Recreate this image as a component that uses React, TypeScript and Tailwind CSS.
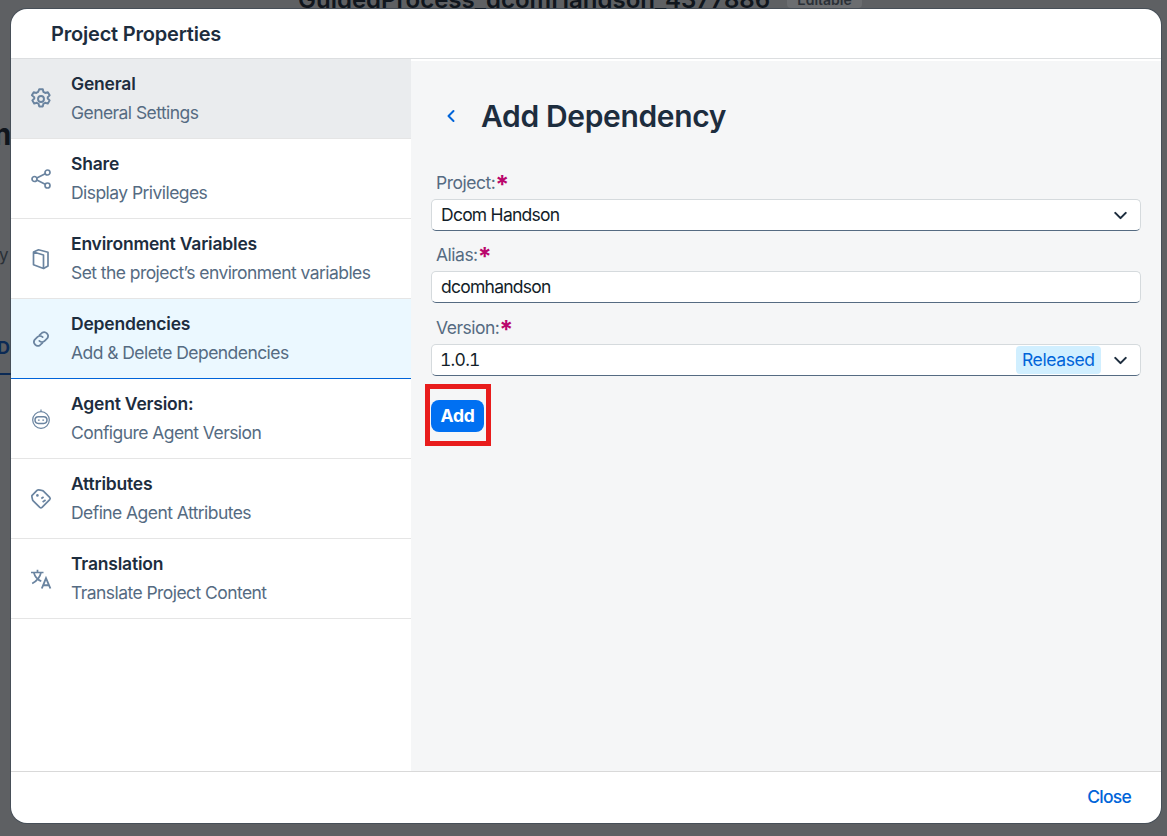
import React from 'react';
import { ChevronDown, ChevronLeft } from 'lucide-react';

const font = { fontFamily: 'Inter' };

const icons: Record<string, React.ReactNode> = {
    gear: (
        <g transform="translate(10 10) scale(1.14) translate(-10 -10)">
            <circle cx="10" cy="10" r="2.6" />
            <path d="M8.4 1.500h3.200l.5 2.300 1.600.9 2.300-.7 1.600 2.800-1.700 1.600v1.200l1.700 1.600-1.600 2.800-2.300-.7-1.600.9-.5 2.300H8.400l-.5-2.300-1.600-.9-2.300.7-1.600-2.800 1.700-1.600V8.400L2 6.800l1.600-2.800 2.300.7 1.600-.9z" strokeLinejoin="round" />
        </g>
    ),
    share: (
        <>
            <circle cx="3.500" cy="10" r="2.500" />
            <circle cx="16.500" cy="3.500" r="2.500" />
            <circle cx="16.500" cy="16.500" r="2.500" />
            <path d="M5.800 8.900 14.200 4.700M5.800 11.100l8.400 4.200" />
        </>
    ),
    book: (
        <>
            <path d="M2.500 3 12.500 6V19.500L2.500 15.800z" strokeLinejoin="round" />
            <path d="M2.500 3 7.500.8 17 3.200V17l-4.500 2.500" strokeLinejoin="round" />
        </>
    ),
    link: (
        <>
            <path d="M8.500 6.200 11 3.800a3.900 3.900 0 0 1 5.400 5.400l-2.700 2.700a3.900 3.900 0 0 1-5.400 0" strokeLinecap="round" />
            <path d="M11.500 13.800 9 16.200a3.900 3.900 0 0 1-5.400-5.400l2.700-2.700a3.900 3.900 0 0 1 5.400 0" strokeLinecap="round" />
        </>
    ),
    bot: (
        <>
            <circle cx="10" cy="11" r="8.300" strokeWidth="1.200" />
            <rect x="4" y="7.800" width="12" height="6.600" rx="3.300" strokeWidth="1.500" />
            <path d="M10 .4v2.200" strokeWidth="1.200" />
            <path d="M7.800 10.400v1.400M12.200 10.400v1.400" strokeWidth="1.700" />
        </>
    ),
    tag: (
        <>
            <path d="M.9 6.600 6 1.400q.7-.6 1.700-.5l3 .4q1 .1 1.700.8l6.300 6.300q1 1.100 0 2.200l-7.700 7.800q-1.100 1-2.200 0L2.200 11.900q-.7-.7-.8-1.700L.9 7.800q0-.6 0-1.200z" strokeLinejoin="round" />
            <circle cx="6.400" cy="6.400" r="1.300" fill="currentColor" stroke="none" />
            <path d="M10.300 9.500 12.600 8M11.600 13 14.600 11" />
        </>
    ),
    lang: (
        <>
            <path d="M0 3.500h12.500M6.500.8v2.700M10 3.500C9 8.500 5.800 12 1.200 14.400M2.800 3.500c1 4 3.700 7.200 7.500 8.800" strokeWidth="1.700" />
            <path d="M10.800 19.500 15 9.200 19.400 19.500M12.200 16.200h5.800" strokeWidth="1.900" />
        </>
    ),
};

const NavIcon = ({ name }: { name: string }) => (
    <svg viewBox="0 0 20 20" className="w-5 h-5 text-[#6a84a0] overflow-visible" fill="none" stroke="currentColor" strokeWidth="1.700">
        {icons[name]}
    </svg>
);

const navItems = [
    { icon: 'gear', title: 'General', sub: 'General Settings', rowClass: 'bg-[#eaecee] border-[#e5e5e5]' },
    { icon: 'share', title: 'Share', sub: 'Display Privileges', rowClass: 'border-[#e5e5e5]' },
    { icon: 'book', title: 'Environment Variables', sub: 'Set the project’s environment variables', rowClass: 'border-[#e5e5e5]' },
    { icon: 'link', title: 'Dependencies', sub: 'Add & Delete Dependencies', rowClass: 'bg-[#ebf8ff] border-[#0064d9]' },
    { icon: 'bot', title: 'Agent Version:', sub: 'Configure Agent Version', rowClass: 'border-[#e5e5e5]' },
    { icon: 'tag', title: 'Attributes', sub: 'Define Agent Attributes', rowClass: 'border-[#e5e5e5]' },
    { icon: 'lang', title: 'Translation', sub: 'Translate Project Content', rowClass: 'border-[#e5e5e5]' },
];

const Label = ({ text }: { text: string }) => (
    <div className="h-[32px] pl-[5px] pt-[1px] flex items-center text-[17.5px] text-[#556b82] tracking-[-0.5px]">
        {text}
        <span className="text-[#ba066c] font-bold text-[25px] leading-none mt-[3px]">*</span>
    </div>
);

const Field = ({ children }: { children: React.ReactNode }) => (
    <div className="h-[32px] bg-white rounded-[5px] border border-[#d5dadd] border-b-[#556b82] pl-[9px] pr-[9px] flex items-center text-[17.5px] text-[#131e29] tracking-[-0.75px]">
        {children}
    </div>
);

export default function App() {
    return (
        <div className="relative h-[836px] w-[1167px] overflow-hidden bg-[#5e6063]" style={font}>
            {/* dimmed page behind the dialog */}
            <div className="absolute left-[298px] top-[-18px] text-[24px] font-semibold text-[#10161d] whitespace-nowrap">
                GuidedProcess_dcomHandson_4377886
            </div>
            <div className="absolute left-[787px] top-[-11px] h-[19px] w-[75px] text-center bg-[#6b6d70] rounded text-[14px] font-semibold text-[#2a3037]">
                Editable
            </div>
            <div className="absolute left-[-16px] top-[112px] text-[30px] font-bold text-[#10161d]">m</div>
            <div className="absolute left-[-1px] top-[243px] text-[17px] text-[#2a3037]">y 2</div>
            <div className="absolute left-[-3px] top-[334px] text-[18px] font-bold text-[#0b2a55]">D</div>
            <div className="absolute left-0 top-[373px] h-[2px] w-[11px] bg-[#0b2a55]" />

            <div className="relative ml-[11px] mt-[9px] w-[1150px] h-[814px] bg-white rounded-[16px] overflow-hidden flex flex-col shadow-[0_0_0_1px_rgba(30,50,70,0.35)]">
                <div className="h-[50px] shrink-0 pl-[40px] flex items-center text-[20px] font-semibold text-[#1d2d3e] tracking-[-0.2px] border-b border-[#dcdee0]">
                    Project Properties
                </div>

                <div className="flex flex-1 min-h-0">
                    <div className="w-[400px] shrink-0 bg-white">
                        {navItems.map((item) => (
                            <div key={item.title} className={`h-[80px] border-b flex ${item.rowClass}`}>
                                <div className="w-[60px] shrink-0 flex items-center justify-center">
                                    <NavIcon name={item.icon} />
                                </div>
                                <div className="pt-[11px]">
                                    <div className="text-[17.5px] leading-[28px] font-semibold text-[#1d2d3e] tracking-[-0.2px]">{item.title}</div>
                                    <div className="text-[17.5px] leading-[30px] text-[#556b82] tracking-[-0.56px]">{item.sub}</div>
                                </div>
                            </div>
                        ))}
                    </div>

                    <div className="flex-1 bg-[#f5f6f7] pl-[20px] pr-[20px] border-t-[2px] border-white">
                        <div className="flex items-center h-[36px] mt-[37px] mb-[33px]">
                            <ChevronLeft className="w-[20px] h-[20px] ml-[10px] mr-[20px] text-[#0064d9]" strokeWidth={2.4} />
                            <span className="text-[30px] font-semibold text-[#1d2d3e] tracking-[-0.35px]">Add Dependency</span>
                        </div>
                        <Label text="Project:" />
                        <Field>
                            <span className="flex-1">Dcom Handson</span>
                            <ChevronDown className="w-[21px] h-[21px] text-[#1d2d3e]" strokeWidth={2.4} />
                        </Field>
                        <div className="mt-[8px]"><Label text="Alias:" /></div>
                        <Field>dcomhandson</Field>
                        <div className="mt-[9px]"><Label text="Version:" /></div>
                        <Field>
                            <span className="flex-1 tabular-nums -ml-[1px]">1.0.1</span>
                            <span className="h-[28px] px-[6px] w-[85px] flex items-center rounded-[4px] bg-[#d1efff] text-[#0064d9] mr-[9px] tracking-[-0.4px]">Released</span>
                            <ChevronDown className="w-[21px] h-[21px] text-[#1d2d3e]" strokeWidth={2.4} />
                        </Field>
                        <div className="mt-[8px] -ml-[6px] w-[66px] h-[62px] border-[5px] border-[#e81c1c] flex items-center pl-[1px] pt-[2px]">
                            <div className="w-[53px] h-[32px] rounded-[8px] bg-[#0070f2] text-white text-[17.5px] font-bold flex items-center justify-center tracking-[-0.2px]">
                                Add
                            </div>
                        </div>
                    </div>
                </div>

                <div className="h-[52px] shrink-0 border-t border-[#d9d9d9] flex items-center justify-end pr-[30px] text-[17.5px] font-medium text-[#0064d9] tracking-[-0.75px]">
                    Close
                </div>
            </div>
        </div>
    );
}
